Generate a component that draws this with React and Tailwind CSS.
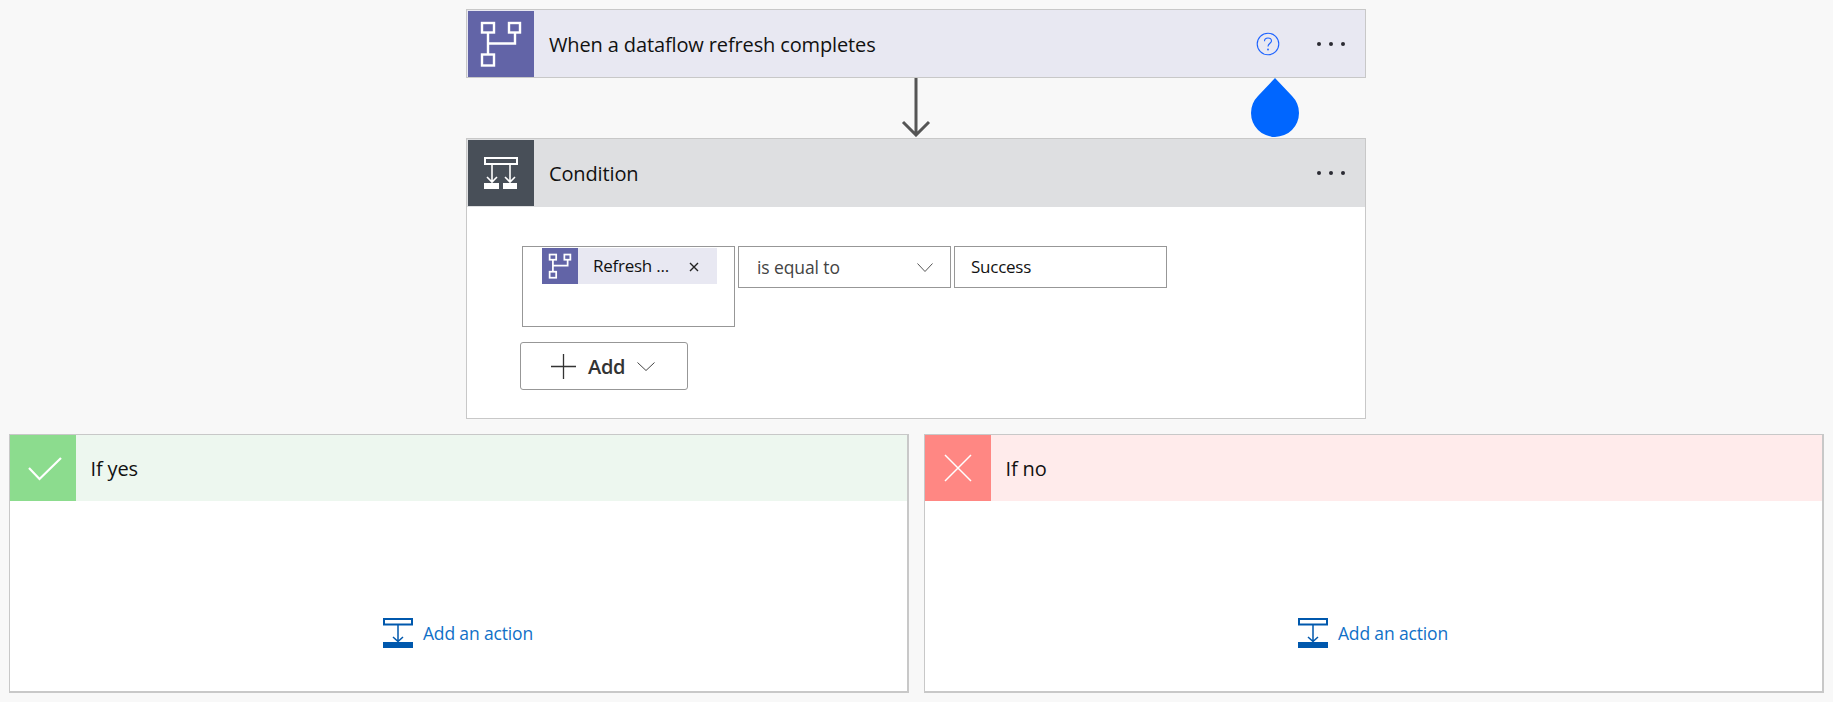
const FONT = "font-['Open_Sans','Noto_Sans',sans-serif]";

function DataflowIcon({ size = 66 }) {
  return (
    <svg width={size} height={size} viewBox="0 0 66 66" fill="none" stroke="#fff" strokeWidth={size > 40 ? 2.4 : 3.2} className="block">
      <rect x="14" y="12" width="12" height="9.5" />
      <rect x="41" y="12" width="11" height="9.5" />
      <rect x="14" y="43.5" width="12" height="11" />
      <path d="M20 21.5V43.5M20 32.5H47V21.5" />
    </svg>
  );
}

function ConditionIcon() {
  return (
    <svg width="66" height="66" viewBox="0 0 66 66" fill="none" stroke="#fff" strokeWidth="1.6" className="block">
      <rect x="17" y="18" width="32" height="6" strokeWidth="2" />
      <path d="M24 24V42M19 37L24 42L29 37M42 24V42M37 37L42 42L47 37" />
      <rect x="16" y="43" width="15" height="6" fill="#fff" stroke="none" />
      <rect x="35" y="43" width="14" height="6" fill="#fff" stroke="none" />
    </svg>
  );
}

function CheckIcon() {
  return (
    <svg width="66" height="66" viewBox="0 0 66 66" fill="none" stroke="#fff" strokeWidth="2.2" className="block">
      <path d="M19 33L29.5 44L51 23" />
    </svg>
  );
}

function CrossIcon() {
  return (
    <svg width="66" height="66" viewBox="0 0 66 66" fill="none" stroke="#fff" strokeWidth="1.5" className="block">
      <path d="M20 20L46 46M46 20L20 46" />
    </svg>
  );
}

function ActionIcon() {
  return (
    <svg width="30" height="30" viewBox="0 0 30 30" fill="none" stroke="#0058ad" strokeWidth="1.5" className="block">
      <rect x="1" y="1" width="28" height="5.5" strokeWidth="2" />
      <path d="M15 7V23.5M10 19L15 23.5L20 19" />
      <rect x="0" y="24" width="30" height="6" fill="#0058ad" stroke="none" />
    </svg>
  );
}

function Dots() {
  return (
    <svg width="28" height="6" viewBox="0 0 28 6" className="block">
      <circle cx="2" cy="3" r="2" fill="#2b2b33" />
      <circle cx="14" cy="3" r="2" fill="#2b2b33" />
      <circle cx="26" cy="3" r="2" fill="#2b2b33" />
    </svg>
  );
}

function Chevron({ w = 16, h = 9, color = "#555" }) {
  return (
    <svg width={w} height={h} viewBox={`0 0 ${w} ${h}`} fill="none" stroke={color} strokeWidth="1" className="block">
      <path d={`M0.5 0.5L${w / 2} ${h - 0.5}L${w - 0.5} 0.5`} />
    </svg>
  );
}

function Header({ icon, iconBg, bg, title, children, inset = "pl-px pt-px", height = "h-[67px]" }) {
  return (
    <div className={`flex ${height} ${inset} ${bg}`}>
      <div className={`w-[66px] h-[66px] shrink-0 ${iconBg}`}>{icon}</div>
      <div className="flex-1 h-[66px] flex items-center pl-[15px] pr-[20px]">
        <span className="text-[20px] leading-[26px] tracking-[-0.13px] text-[#111] mt-[2px]">{title}</span>
        <div className="ml-auto flex items-center">{children}</div>
      </div>
    </div>
  );
}

function BranchCard({ icon, iconBg, bg, title }) {
  return (
    <div className="w-[900px] h-[259px] bg-white border border-[#c8c8c8] border-b-2 border-r-2">
      <Header icon={icon} iconBg={iconBg} bg={bg} title={title} inset="" height="h-[66px]" />
      <div className="flex justify-center pt-[117px]">
        <div className="flex items-center gap-[10px]">
          <ActionIcon />
          <span className="text-[17.5px] tracking-[-0.15px] leading-[30px] text-[#1170c7]">Add an action</span>
        </div>
      </div>
    </div>
  );
}

export default function App() {
  return (
    <div className={`w-[1833px] h-[702px] overflow-hidden bg-[#f8f8f8] pt-[9px] pr-px flex flex-col items-center ${FONT}`}>
      <div className="w-[900px] bg-white border border-[#c8c8c8]">
        <Header
          icon={<DataflowIcon />}
          iconBg="bg-[#6264a7]"
          bg="bg-[#e8e8f2]"
          title="When a dataflow refresh completes"
        >
          <svg width="24" height="24" viewBox="0 0 24 24" fill="none" stroke="#1d63ff" strokeWidth="1.1" className="block mr-[37px]">
            <circle cx="12" cy="12" r="10.8" />
            <path d="M8.5 9.2C8.5 7.2 10 6 12 6C14 6 15.5 7.2 15.5 9C15.5 11.2 12 11.5 12 14.5" />
            <circle cx="12" cy="17.5" r="0.9" fill="#1d63ff" stroke="none" />
          </svg>
          <Dots />
        </Header>
      </div>

      <div className="relative w-[900px] h-[60px] flex justify-center">
        <svg width="30" height="59" viewBox="0 0 30 59" fill="none" stroke="#555" strokeWidth="3" className="block -ml-px">
          <path d="M15 0V57M2 44L15 57L28 44" />
        </svg>
        <svg width="48" height="60" viewBox="0 0 48 60" className="absolute left-[785px] top-0 block">
          <path d="M24 0L41 18A24 24 0 1 1 7 18Z" fill="#0066ff" />
        </svg>
      </div>

      <div className="w-[900px] h-[281px] bg-white border border-[#c8c8c8]">
        <Header icon={<ConditionIcon />} iconBg="bg-[#484f58]" bg="bg-[#dedfe1]" title="Condition" height="h-[68px]">
          <Dots />
        </Header>
        <div className="pl-[53px] pt-[39px]">
          <div className="flex items-start gap-[3px] pl-[2px]">
            <div className="w-[213px] h-[81px] border border-[#979797] pl-[19px] pt-px">
              <div className="w-[175px] h-[36px] flex items-center bg-[#e8e8f2]">
                <div className="w-[36px] h-[36px] bg-[#6264a7]">
                  <DataflowIcon size={36} />
                </div>
                <span className="ml-[15px] text-[17px] tracking-[-0.25px] text-[#111] leading-[32px]">Refresh ...</span>
                <svg width="10" height="10" viewBox="0 0 10 10" fill="none" stroke="#222" strokeWidth="1.4" className="block ml-auto mr-[18px] mt-[2px]">
                  <path d="M1 1L9 9M9 1L1 9" />
                </svg>
              </div>
            </div>
            <div className="w-[213px] h-[42px] border border-[#979797] flex items-center pl-[18px] pr-[17px]">
              <span className="text-[17.5px] tracking-[-0.1px] text-[#444]">is equal to</span>
              <span className="ml-auto"><Chevron /></span>
            </div>
            <div className="w-[213px] h-[42px] border border-[#979797] flex items-center pl-[16px]">
              <span className="text-[17px] tracking-[-0.25px] text-[#111]">Success</span>
            </div>
          </div>
          <div className="mt-[15px] w-[168px] h-[48px] border border-[#979797] rounded-[3px] flex items-center pl-[30px]">
            <svg width="25" height="25" viewBox="0 0 25 25" fill="none" stroke="#333" strokeWidth="1.3" className="block">
              <path d="M12.5 0V25M0 12.5H25" />
            </svg>
            <span className="ml-[12px] text-[20px] font-semibold tracking-[-0.3px] text-[#333] mt-px">Add</span>
            <span className="ml-[12px]"><Chevron w={18} h={9} color="#444" /></span>
          </div>
        </div>
      </div>

      <div className="w-[1815px] mt-[15px] flex justify-between">
        <BranchCard icon={<CheckIcon />} iconBg="bg-[#8cdc8e]" bg="bg-[#edf7ef]" title="If yes" />
        <BranchCard icon={<CrossIcon />} iconBg="bg-[#ff8783]" bg="bg-[#ffebeb]" title="If no" />
      </div>
    </div>
  );
}
